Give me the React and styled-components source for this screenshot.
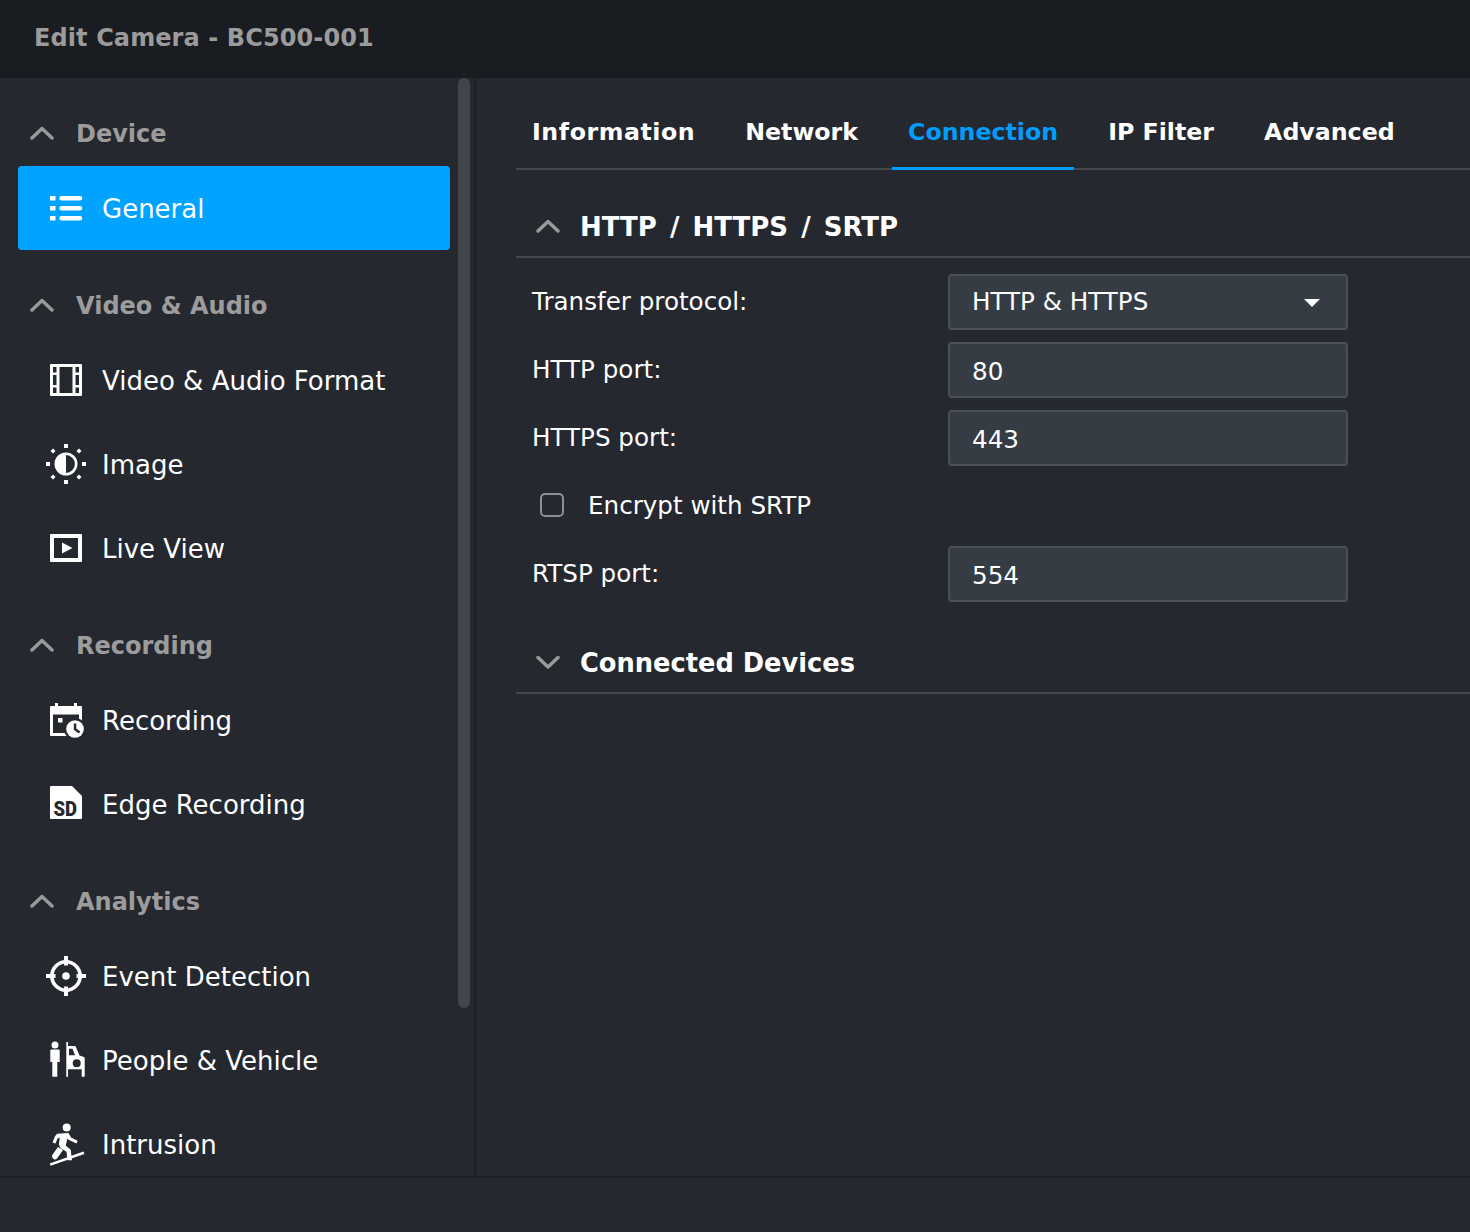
import React from 'react';
import styled, { createGlobalStyle } from 'styled-components';

const GlobalStyle = createGlobalStyle`
  html, body {
    margin: 0;
    padding: 0;
    background: #25282f;
  }
  * {
    box-sizing: border-box;
  }
`;

const Page = styled.div`
  height: 1232px;
  display: flex;
  flex-direction: column;
  overflow: hidden;
  background: #25282f;
  color: #fff;
  font-family: "DejaVu Sans", Verdana, sans-serif;
`;

const TitleBar = styled.header`
  height: 78px;
  flex: none;
  display: flex;
  align-items: center;
  padding: 0 0 2px 34px;
  background: #191c21;
  color: #9b9b9b;
  font-size: 24px;
  font-weight: 700;
  letter-spacing: 0.1px;
`;

const Body = styled.div`
  height: 1098px;
  flex: none;
  display: flex;
`;

const Sidebar = styled.aside`
  position: relative;
  width: 476px;
  flex: none;
  overflow: hidden;
  padding: 22px 24px 0 18px;
  border-right: 2px solid #1c1f24;
`;

const ScrollThumb = styled.div`
  position: absolute;
  top: 0;
  left: 458px;
  width: 12px;
  height: 930px;
  border-radius: 6px;
  background: #42464b;
`;

const Group = styled.section`
  margin-bottom: 22px;
`;

const GroupHead = styled.div`
  height: 66px;
  display: flex;
  align-items: center;
  gap: 22px;
  padding-left: 12px;
  color: #9c9c9c;
  font-size: 24px;
  font-weight: 700;

  span {
    padding-top: 1px;
  }
`;

const Item = styled.div`
  height: 84px;
  display: flex;
  align-items: center;
  gap: 16px;
  padding-left: 28px;
  border-radius: 4px;
  background: ${(p) => (p.$active ? '#00a3ff' : 'transparent')};
  font-size: 26px;

  span {
    padding-top: 2px;
  }
`;

const Icon = styled.svg`
  width: 40px;
  height: 40px;
  flex: none;
  overflow: visible;
  fill: #fff;
`;

const Chevron = styled.svg`
  width: 24px;
  height: 14px;
  flex: none;
  fill: none;
  stroke: #999;
  stroke-width: 3.5;
  stroke-linecap: round;
  stroke-linejoin: round;
`;

const Main = styled.main`
  flex: 1;
  padding: 0 0 0 40px;
`;

const Tabs = styled.nav`
  height: 92px;
  display: flex;
  align-items: stretch;
  gap: 18px;
  border-bottom: 2px solid #45474b;
`;

const Tab = styled.div`
  display: flex;
  align-items: center;
  padding: 18px 16px 0;
  margin-bottom: -2px;
  border-bottom: 3px solid ${(p) => (p.$active ? '#009dff' : 'transparent')};
  color: ${(p) => (p.$active ? '#009dff' : '#fff')};
  font-size: 23.700px;
  font-weight: 700;
  letter-spacing: ${(p) => (p.$wide ? '0.55px' : '0')};
`;

const SectionHead = styled.div`
  height: ${(p) => (p.$collapsed ? '60px' : '88px')};
  display: flex;
  align-items: center;
  gap: 20px;
  padding: ${(p) => (p.$collapsed ? '0 0 2px 20px' : '26px 0 0 20px')};
  border-bottom: 2px solid #45474b;
  font-size: ${(p) => (p.$collapsed ? '25.700px' : '26px')};
  font-weight: 700;
  word-spacing: ${(p) => (p.$collapsed ? '0' : '4px')};

  span {
    padding-top: 2px;
  }
`;

const Rows = styled.div`
  display: flex;
  flex-direction: column;
  gap: 12px;
  padding: 16px 0 32px 16px;
`;

const Row = styled.div`
  height: 56px;
  display: flex;
  align-items: center;
`;

const Label = styled.div`
  width: 416px;
  flex: none;
  padding-bottom: 2px;
  font-size: 24.600px;
`;

const Field = styled.div`
  width: 400px;
  height: 56px;
  display: flex;
  align-items: center;
  justify-content: space-between;
  padding: ${(p) => (p.$select ? '0 26px 1px 22px' : '3px 26px 0 22px')};
  border: 2px solid #4b5159;
  border-radius: 4px;
  background: #363c44;
  font-size: 24.600px;
`;

const Caret = styled.span`
  width: 0;
  height: 0;
  margin-top: 2px;
  border-left: 8px solid transparent;
  border-right: 8px solid transparent;
  border-top: 8px solid #fff;
`;

const CheckRow = styled(Row)`
  gap: 24px;
  padding: 0 0 2px 8px;
  font-size: 24.600px;
`;

const CheckBox = styled.span`
  width: 24px;
  height: 24px;
  flex: none;
  border: 2px solid #8d8f93;
  border-radius: 5px;
`;

const Up = () => (
  <Chevron viewBox="0 0 24 14"><path d="M2 12 12 2.500l10 9.500" /></Chevron>
);

const Down = () => (
  <Chevron viewBox="0 0 24 14"><path d="M2 2.500l10 9.500 10-9.500" /></Chevron>
);

const ListIcon = () => (
  <Icon viewBox="0 0 40 40">
    <path d="M4 8h5.500v4.500H4zM4 18h5.500v4.500H4zM4 28h5.500v4.500H4z" />
    <path d="M15.500 8H34a2.200 2.200 0 0 1 0 4.500H15.500a2.200 2.200 0 0 1 0-4.500zM15.500 18H34a2.200 2.200 0 0 1 0 4.500H15.500a2.200 2.200 0 0 1 0-4.500zM15.500 28H34a2.200 2.200 0 0 1 0 4.500H15.500a2.200 2.200 0 0 1 0-4.500z" />
  </Icon>
);

const FilmIcon = () => (
  <Icon viewBox="0 0 40 40">
    <path
      fillRule="evenodd"
      d="M5 4h30a1 1 0 0 1 1 1v30a1 1 0 0 1-1 1H5a1 1 0 0 1-1-1V5a1 1 0 0 1 1-1zM7 7v5.500h3.500V7zM7 15v10h3.500V15zM7 27.500V33h3.500v-5.500zM13.500 7v26h13V7zM29.500 7v5.500H33V7zM29.500 15v10H33V15zM29.500 27.500V33H33v-5.500z"
    />
  </Icon>
);

const ImageIcon = () => (
  <Icon viewBox="0 0 40 40">
    <circle cx="20" cy="20" r="10.200" fill="none" stroke="#fff" strokeWidth="2.600" />
    <path d="M20 9a11 11 0 0 0 0 22z" />
    <path d="M18 0h4v4h-4zM18 36h4v4h-4zM0 18h4v4H0zM36 18h4v4h-4z" />
    <path d="M7 4.500 9.500 7 7 9.500 4.500 7zM33 4.500 35.500 7 33 9.500 30.500 7zM7 30.500 9.500 33 7 35.500 4.500 33zM33 30.500 35.500 33 33 35.500 30.500 33z" />
  </Icon>
);

const PlayIcon = () => (
  <Icon viewBox="0 0 40 40">
    <path
      fillRule="evenodd"
      d="M5 6h30a1 1 0 0 1 1 1v26a1 1 0 0 1-1 1H5a1 1 0 0 1-1-1V7a1 1 0 0 1 1-1zM8 10v20h24V10z"
    />
    <path d="M16 14.500 26.500 20 16 25.500z" />
  </Icon>
);

const CalendarIcon = () => (
  <Icon viewBox="0 0 40 40">
    <path
      fillRule="evenodd"
      d="M9 3h3v3h16V3h3v3h4a1 1 0 0 1 1 1v29H5a1 1 0 0 1-1-1V7a1 1 0 0 1 1-1h4zM7 14.500V33h26V14.500z"
    />
    <path d="M12 18h4.500v4.500H12z" />
    <circle cx="29" cy="29" r="11" fill="#25282f" />
    <circle cx="29" cy="29" r="8.800" />
    <path d="M27.800 23.500h2.500V28.500l4 3-1.500 2-5-3.800z" fill="#25282f" />
  </Icon>
);

const SdIcon = () => (
  <Icon viewBox="0 0 40 40">
    <path d="M5 2h21l10 10v22a1 1 0 0 1-1 1H5a1 1 0 0 1-1-1V3a1 1 0 0 1 1-1z" />
    <text x="7.500" y="32" fill="#25282f" fontFamily="Roboto" fontSize="19.500" fontWeight="900" textLength="23.500" lengthAdjust="spacingAndGlyphs">SD</text>
  </Icon>
);

const TargetIcon = () => (
  <Icon viewBox="0 0 40 40">
    <circle cx="20" cy="20" r="14.200" fill="none" stroke="#fff" strokeWidth="3.600" />
    <circle cx="20" cy="20" r="3.800" />
    <path d="M18 0h4v9.500h-4zM18 30.500h4V40h-4zM0 18h9.500v4H0zM30.500 18H40v4h-9.500z" />
  </Icon>
);

const PeopleIcon = () => (
  <Icon viewBox="0 0 40 40">
    <circle cx="9" cy="5" r="3.500" />
    <path d="M5.300 9.500h7.400a1 1 0 0 1 1 1V22h-2.400v14.700h-5V22H4.300V10.500a1 1 0 0 1 1-1z" />
    <path
      fillRule="evenodd"
      d="M20.300 2H22v4h6.500a1.500 1.500 0 0 1 1.400 1L33.500 15.500l3.700 1.300a1.500 1.500 0 0 1 1.500 1.500V36.700h-3V29.300H22v7.400h-1.700zM23 8.700v6.600h6L26.500 8.700zM30.700 19.300a4 4 0 1 0 0 8 4 4 0 0 0 0-8z"
    />
  </Icon>
);

const RunnerIcon = () => (
  <Icon viewBox="0 0 40 40">
    <circle cx="20.700" cy="3.500" r="4" />
    <path d="M11 9.700 22.500 9 25 13.500l6.600 3.300-1.100 2.800-8-3.900-1.100-1.200-1.700 7 5 4.300 1.300 10.500h-4.500l-1-8.500-6-3.800-1.600-3.400.8-7-2.200.9-2 5-3-1.100 2.500-6.200z" />
    <path d="M12 23 17 26l-6 8.400a2.900 2.900 0 0 1-4.700-3.300z" />
    <path d="M3.700 39.400 37.500 27.500l.9 2.400L4.600 41.800z" />
  </Icon>
);

const Footer = styled.footer`
  flex: 1;
  border-top: 2px solid #1c1f24;
`;

export default function App() {
  return (
    <>
      <GlobalStyle />
      <Page>
        <TitleBar>Edit Camera - BC500-001</TitleBar>
        <Body>
          <Sidebar>
            <ScrollThumb />
            <Group>
              <GroupHead><Up /><span>Device</span></GroupHead>
              <Item $active><ListIcon /><span>General</span></Item>
            </Group>
            <Group>
              <GroupHead><Up /><span>Video &amp; Audio</span></GroupHead>
              <Item><FilmIcon /><span>Video &amp; Audio Format</span></Item>
              <Item><ImageIcon /><span>Image</span></Item>
              <Item><PlayIcon /><span>Live View</span></Item>
            </Group>
            <Group>
              <GroupHead><Up /><span>Recording</span></GroupHead>
              <Item><CalendarIcon /><span>Recording</span></Item>
              <Item><SdIcon /><span>Edge Recording</span></Item>
            </Group>
            <Group>
              <GroupHead><Up /><span>Analytics</span></GroupHead>
              <Item><TargetIcon /><span>Event Detection</span></Item>
              <Item><PeopleIcon /><span>People &amp; Vehicle</span></Item>
              <Item><RunnerIcon /><span>Intrusion</span></Item>
            </Group>
          </Sidebar>
          <Main>
            <Tabs>
              <Tab $wide>Information</Tab>
              <Tab>Network</Tab>
              <Tab $active>Connection</Tab>
              <Tab>IP Filter</Tab>
              <Tab>Advanced</Tab>
            </Tabs>
            <SectionHead><Up /><span>HTTP / HTTPS / SRTP</span></SectionHead>
            <Rows>
              <Row>
                <Label>Transfer protocol:</Label>
                <Field $select>HTTP &amp; HTTPS<Caret /></Field>
              </Row>
              <Row>
                <Label>HTTP port:</Label>
                <Field>80</Field>
              </Row>
              <Row>
                <Label>HTTPS port:</Label>
                <Field>443</Field>
              </Row>
              <CheckRow><CheckBox />Encrypt with SRTP</CheckRow>
              <Row>
                <Label>RTSP port:</Label>
                <Field>554</Field>
              </Row>
            </Rows>
            <SectionHead $collapsed><Down /><span>Connected Devices</span></SectionHead>
          </Main>
        </Body>
        <Footer />
      </Page>
    </>
  );
}
